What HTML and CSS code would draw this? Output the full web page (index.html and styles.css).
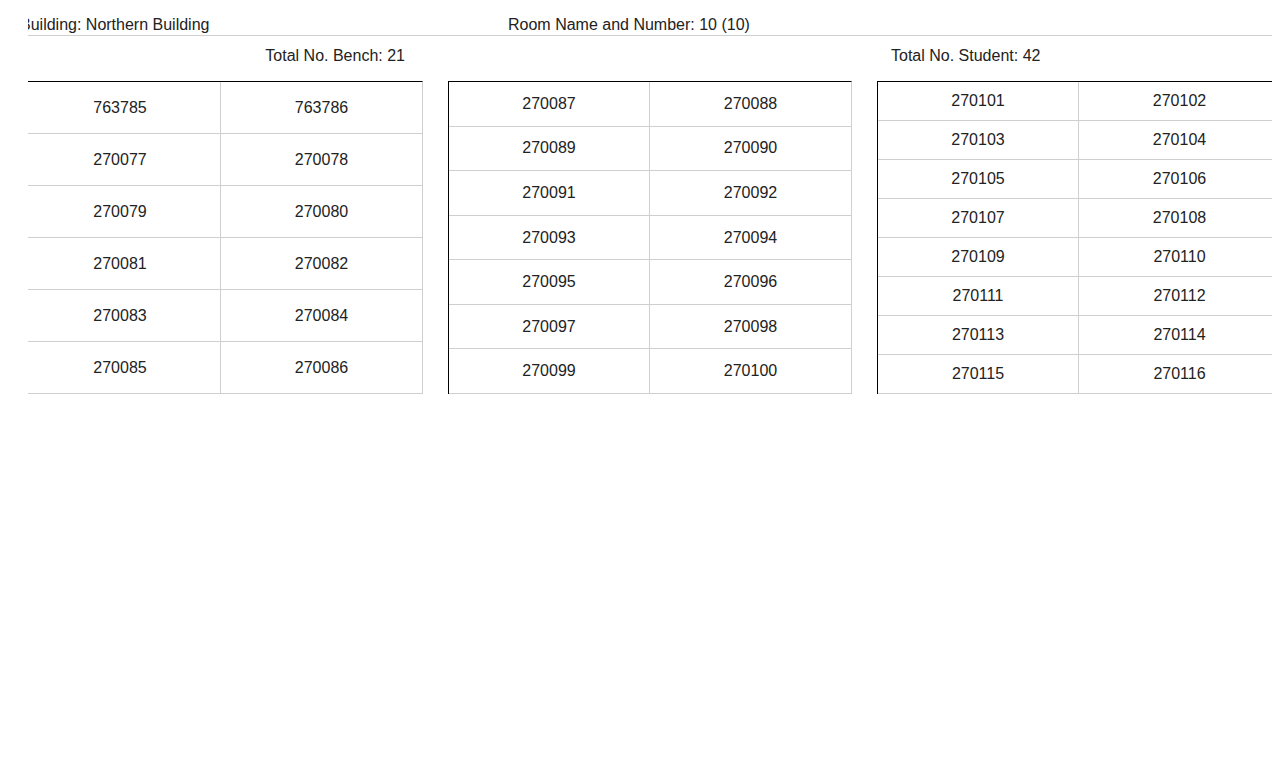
FILE: index.html
```html
<!DOCTYPE html>
<html lang="en">
<head>
<meta charset="utf-8">
<title>Seat Plan</title>
<link rel="stylesheet" href="styles.css">
</head>
<body>
<div class="clip">
  <div class="page">
    <div class="header">
      <div class="hd-building">Building: Northern Building</div>
      <div class="hd-room">Room Name and Number: 10 (10)</div>
    </div>
    <div class="summary">
      <div class="sum-bench">Total No. Bench: 21</div>
      <div class="sum-mid"></div>
      <div class="sum-student">Total No. Student: 42</div>
    </div>
    <div class="tables">
      <div class="seat-table">
        <div class="seat-row"><div class="cell">763785</div><div class="cell">763786</div></div>
        <div class="seat-row"><div class="cell">270077</div><div class="cell">270078</div></div>
        <div class="seat-row"><div class="cell">270079</div><div class="cell">270080</div></div>
        <div class="seat-row"><div class="cell">270081</div><div class="cell">270082</div></div>
        <div class="seat-row"><div class="cell">270083</div><div class="cell">270084</div></div>
        <div class="seat-row"><div class="cell">270085</div><div class="cell">270086</div></div>
      </div>
      <div class="seat-table">
        <div class="seat-row"><div class="cell">270087</div><div class="cell">270088</div></div>
        <div class="seat-row"><div class="cell">270089</div><div class="cell">270090</div></div>
        <div class="seat-row"><div class="cell">270091</div><div class="cell">270092</div></div>
        <div class="seat-row"><div class="cell">270093</div><div class="cell">270094</div></div>
        <div class="seat-row"><div class="cell">270095</div><div class="cell">270096</div></div>
        <div class="seat-row"><div class="cell">270097</div><div class="cell">270098</div></div>
        <div class="seat-row"><div class="cell">270099</div><div class="cell">270100</div></div>
      </div>
      <div class="seat-table">
        <div class="seat-row"><div class="cell">270101</div><div class="cell">270102</div></div>
        <div class="seat-row"><div class="cell">270103</div><div class="cell">270104</div></div>
        <div class="seat-row"><div class="cell">270105</div><div class="cell">270106</div></div>
        <div class="seat-row"><div class="cell">270107</div><div class="cell">270108</div></div>
        <div class="seat-row"><div class="cell">270109</div><div class="cell">270110</div></div>
        <div class="seat-row"><div class="cell">270111</div><div class="cell">270112</div></div>
        <div class="seat-row"><div class="cell">270113</div><div class="cell">270114</div></div>
        <div class="seat-row"><div class="cell">270115</div><div class="cell">270116</div></div>
      </div>
    </div>
  </div>
</div>
</body>
</html>
```

FILE: styles.css
```css
html, body {
  margin: 0;
  padding: 0;
  background: #fff;
}

body {
  font-family: "Liberation Sans", Arial, sans-serif;
  font-size: 16px;
  line-height: 18px;
  color: #222;
}

.clip {
  margin-left: 28px;
  width: 1244px;
  overflow: hidden;
}

.page {
  margin-left: -9px;
  width: 1262px;
}

.header {
  display: flex;
  box-sizing: border-box;
  height: 36px;
  padding-top: 16px;
  border-bottom: 1px solid #cfcfcf;
}

.hd-building {
  width: 488px;
  padding-left: 1px;
  white-space: nowrap;
}

.hd-room {
  white-space: nowrap;
}

.summary {
  display: grid;
  grid-template-columns: 404px 404px 404px;
  column-gap: 25px;
  padding-top: 11px;
  height: 18px;
}

.sum-bench {
  text-align: right;
  padding-right: 18px;
}

.sum-student {
  padding-left: 14px;
}

.tables {
  display: grid;
  grid-template-columns: 404px 404px 404px;
  column-gap: 25px;
  margin-top: 16px;
}

.seat-table {
  box-sizing: border-box;
  height: 313px;
  display: flex;
  flex-direction: column;
  border-top: 1px solid #000;
  border-left: 1px solid #000;
  border-right: 1px solid #cfcfcf;
}

.seat-row {
  flex: 1 1 0;
  display: grid;
  grid-template-columns: 1fr 1fr;
  border-bottom: 1px solid #cfcfcf;
}

.cell {
  display: flex;
  align-items: center;
  justify-content: center;
}

.cell:first-child {
  border-right: 1px solid #cfcfcf;
}
```
